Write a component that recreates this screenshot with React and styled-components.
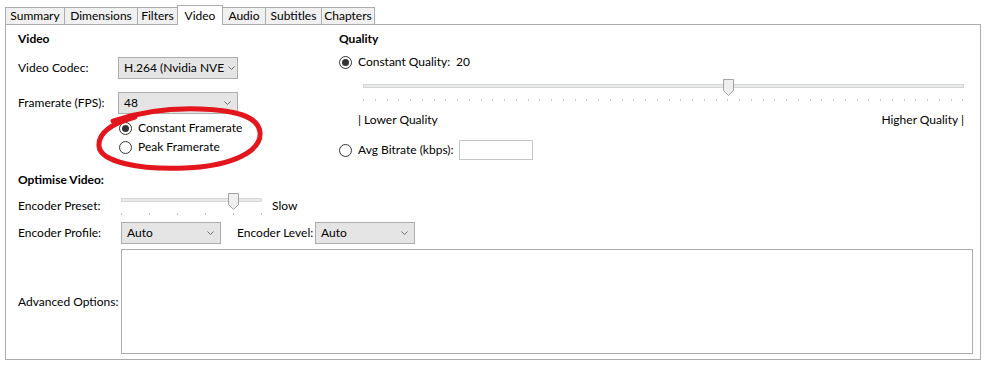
import React from "react";
import styled, { createGlobalStyle } from "styled-components";

const GlobalStyle = createGlobalStyle`
	html, body {
		margin: 0;
		padding: 0;
		background: #fff;
	}
	body {
		font-family: Lato, "Noto Sans", "Segoe UI", sans-serif;
		font-size: 12px;
		line-height: 16px;
		color: #000;
	}
`;

const StyledWindow = styled.div`
	position: relative;
	box-sizing: border-box;
	width: 986px;
	height: 369px;
	padding: 5px 5px 0 5px;
`;

const StyledTabStrip = styled.div`
	display: flex;
	align-items: flex-end;
	height: 19px;
	position: relative;
	z-index: 1;
`;

const StyledTab = styled.div`
	box-sizing: border-box;
	display: flex;
	align-items: center;
	justify-content: center;
	width: ${(props) => props.width}px;
	height: ${(props) => (props.active ? "20px" : "17px")};
	margin-bottom: ${(props) => (props.active ? "-1px" : "0")};
	border: 1px solid #acacac;
	border-bottom: none;
	background: ${(props) => (props.active ? "#fff" : "#f0f0f0")};
	position: relative;
	z-index: ${(props) => (props.active ? 2 : 1)};

	& + & {
		margin-left: -1px;
	}
`;

const StyledPanel = styled.div`
	box-sizing: border-box;
	height: 336px;
	border: 1px solid #acacac;
	padding: 6px 7px 0 12px;
	background: #fff;
`;

const StyledColumns = styled.div`
	display: flex;
	height: 129px;
`;

const StyledColumn = styled.div`
	display: flex;
	flex-direction: column;
	flex-shrink: 0;
	width: ${(props) => props.width}px;
`;

const StyledHeading = styled.div`
	font-weight: 700;
	height: 16px;
	margin-top: ${(props) => props.mt || 0}px;
`;

const StyledRow = styled.div`
	display: flex;
	align-items: center;
	margin-top: ${(props) => props.mt || 0}px;
`;

const StyledLabel = styled.span`
	flex-shrink: 0;
	width: ${(props) => (props.width ? `${props.width}px` : "auto")};
	margin-left: ${(props) => props.ml || 0}px;
	padding-top: ${(props) => props.pt || 0}px;
	white-space: nowrap;
`;

const StyledSelect = styled.div`
	box-sizing: border-box;
	display: flex;
	align-items: center;
	flex-shrink: 0;
	width: ${(props) => props.width}px;
	height: 22px;
	padding-left: 5px;
	border: 1px solid #acacac;
	background: #e5e5e5;
`;

const StyledSelectText = styled.span`
	flex: 1;
	white-space: nowrap;
`;

const StyledChevron = styled.svg`
	flex-shrink: 0;
	width: 7px;
	height: 4px;
	margin: 0 6px 0 4px;
`;

const StyledRadioRow = styled.div`
	display: flex;
	align-items: center;
	gap: 6px;
	height: ${(props) => props.h || 16}px;
	margin-top: ${(props) => props.mt || 0}px;
	margin-left: ${(props) => props.ml || 0}px;
`;

const StyledRadio = styled.span`
	box-sizing: border-box;
	position: relative;
	flex-shrink: 0;
	width: 13px;
	height: 13px;
	border: 1px solid #333;
	border-radius: 50%;
	background: #fff;

	&::after {
		content: "";
		display: ${(props) => (props.checked ? "block" : "none")};
		position: absolute;
		left: 2px;
		top: 2px;
		width: 7px;
		height: 7px;
		border-radius: 50%;
		background: #333;
	}
`;

const StyledSlider = styled.div`
	position: relative;
	flex-shrink: 0;
	width: ${(props) => props.width}px;
	height: 23px;
	margin-left: ${(props) => props.ml || 0}px;
	margin-top: ${(props) => props.mt || 0}px;
`;

const StyledTrack = styled.div`
	position: absolute;
	left: 0;
	right: 0;
	top: 5px;
	height: 4px;
	box-sizing: border-box;
	border: 1px solid #d6d6d6;
	background: #e7eaea;
`;

const StyledTicks = styled.div`
	position: absolute;
	left: 0;
	right: 0;
	top: 20px;
	height: 2px;
	display: flex;
	justify-content: space-between;
`;

const StyledTick = styled.span`
	width: 1px;
	height: 2px;
	background: #c4c4c4;
`;

const StyledThumb = styled.svg`
	position: absolute;
	top: 0;
	width: 11px;
	height: 17px;
	margin-left: -5px;
`;

const StyledScaleLabels = styled.div`
	display: flex;
	justify-content: space-between;
	height: 16px;
	margin-top: 10px;
	padding-left: 19px;
`;

const StyledTextBox = styled.div`
	box-sizing: border-box;
	flex-shrink: 0;
	width: ${(props) => props.width}px;
	height: ${(props) => props.height}px;
	border: 1px solid ${(props) => props.border || "#c5c5c5"};
	background: #fff;
`;

const StyledAnnotation = styled.svg`
	position: absolute;
	left: 0;
	top: 0;
	width: 986px;
	height: 369px;
	pointer-events: none;
	z-index: 5;
`;

const Select = ({ width, value }) => (
	<StyledSelect width={width}>
		<StyledSelectText>{value}</StyledSelectText>
		<StyledChevron viewBox="0 0 7 4">
			<polyline points="0.5,0.5 3.5,3.5 6.5,0.5" fill="none" stroke="#6d6d6d" strokeWidth="1" />
		</StyledChevron>
	</StyledSelect>
);

const Slider = ({ width, steps, value, ml, mt }) => {
	const ticks = Array.from({ length: steps + 1 });
	const left = (value / steps) * (width - 1);
	return (
		<StyledSlider width={width} ml={ml} mt={mt}>
			<StyledTrack />
			<StyledTicks>
				{ticks.map((_, i) => (
					<StyledTick key={i} />
				))}
			</StyledTicks>
			<StyledThumb viewBox="0 0 11 17" style={{ left: `${left}px` }}>
				<path
					d="M0.5 0.5 H10.5 V11.5 L5.5 16.5 L0.5 11.5 Z"
					fill="#efefef"
					stroke="#a3a3a3"
					strokeWidth="1"
				/>
			</StyledThumb>
		</StyledSlider>
	);
};

const tabs = [
	{ name: "Summary", width: 60 },
	{ name: "Dimensions", width: 74 },
	{ name: "Filters", width: 41 },
	{ name: "Video", width: 46, active: true },
	{ name: "Audio", width: 44 },
	{ name: "Subtitles", width: 57 },
	{ name: "Chapters", width: 54 },
];

const App = () => {
	return (
		<StyledWindow>
			<GlobalStyle />
			<StyledTabStrip>
				{tabs.map((tab) => (
					<StyledTab key={tab.name} width={tab.width} active={tab.active}>
						{tab.name}
					</StyledTab>
				))}
			</StyledTabStrip>
			<StyledPanel>
				<StyledColumns>
					<StyledColumn width={321}>
						<StyledHeading>Video</StyledHeading>
						<StyledRow mt={10}>
							<StyledLabel width={100}>Video Codec:</StyledLabel>
							<Select width={120} value="H.264 (Nvidia NVE" />
						</StyledRow>
						<StyledRow mt={13}>
							<StyledLabel width={100}>Framerate (FPS):</StyledLabel>
							<Select width={120} value="48" />
						</StyledRow>
						<StyledRadioRow mt={6} ml={101}>
							<StyledRadio checked />
							<span>Constant Framerate</span>
						</StyledRadioRow>
						<StyledRadioRow mt={3} ml={101}>
							<StyledRadio />
							<span>Peak Framerate</span>
						</StyledRadioRow>
					</StyledColumn>
					<StyledColumn width={625}>
						<StyledHeading>Quality</StyledHeading>
						<StyledRadioRow mt={7}>
							<StyledRadio checked />
							<StyledLabel width={92}>Constant Quality:</StyledLabel>
							<span>20</span>
						</StyledRadioRow>
						<Slider width={601} steps={51} value={31} ml={24} mt={9} />
						<StyledScaleLabels>
							<span>| Lower Quality</span>
							<span>Higher Quality |</span>
						</StyledScaleLabels>
						<StyledRadioRow mt={12} h={20}>
							<StyledRadio />
							<StyledLabel width={95}>Avg Bitrate (kbps):</StyledLabel>
							<StyledTextBox width={74} height={20} />
						</StyledRadioRow>
					</StyledColumn>
				</StyledColumns>
				<StyledHeading mt={12}>Optimise Video:</StyledHeading>
				<StyledRow mt={5}>
					<StyledLabel width={103} pt={3}>
						Encoder Preset:
					</StyledLabel>
					<Slider width={141} steps={5} value={4} />
					<StyledLabel ml={10} pt={3}>
						Slow
					</StyledLabel>
				</StyledRow>
				<StyledRow mt={6}>
					<StyledLabel width={103}>Encoder Profile:</StyledLabel>
					<Select width={100} value="Auto" />
					<StyledLabel width={78} ml={16}>
						Encoder Level:
					</StyledLabel>
					<Select width={100} value="Auto" />
				</StyledRow>
				<StyledRow mt={5}>
					<StyledLabel width={103}>Advanced Options:</StyledLabel>
					<StyledTextBox width={852} height={105} border="#acacac" />
				</StyledRow>
			</StyledPanel>
			<StyledAnnotation viewBox="0 0 986 369">
				<path
					d="M113 121 C140 112 170 108 200 109 C235 110 258 116 260 132 C262 150 235 166 185 168 C140 170 100 162 99 146 C98 133 110 124 135 117"
					fill="none"
					stroke="#e3161d"
					strokeWidth="5"
					strokeLinecap="round"
					strokeLinejoin="round"
				/>
			</StyledAnnotation>
		</StyledWindow>
	);
};

export default App;
